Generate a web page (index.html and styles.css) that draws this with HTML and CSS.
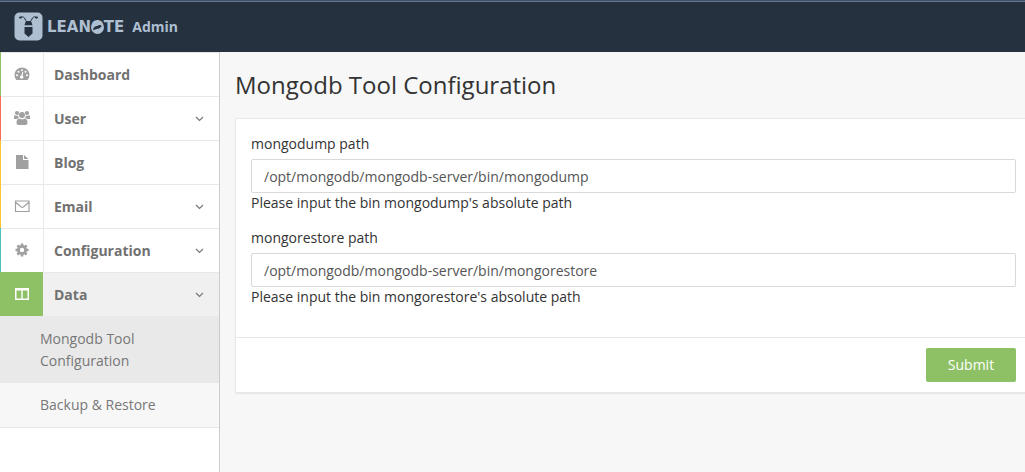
FILE: index.html
```html
<!DOCTYPE html>
<html lang="en">
<head>
<meta charset="utf-8">
<title>Leanote Admin</title>
<link rel="stylesheet" href="styles.css">
</head>
<body>
<header class="header">
  <a class="brand" href="#">
    <svg class="brand-mark" viewBox="0 0 29 29" aria-hidden="true">
      <rect x="0.500" y="0.500" width="28" height="28" rx="5" fill="#adbfd1"/>
      <path d="M6 6c1.500-1.600 3.500-1.400 4.500 0 .8 1.200 1.200 3 2.500 4M23 6c-1.500-1.600-3.500-1.400-4.500 0-.8 1.200-1.200 3-2.500 4" fill="none" stroke="#25313e" stroke-width="1"/>
      <ellipse cx="6.500" cy="5.500" rx="1.600" ry="1.100" fill="#25313e"/><ellipse cx="22.500" cy="5.500" rx="1.600" ry="1.100" fill="#25313e"/>
      <path d="M11.500 10c1-1.200 5-1.200 6 0l1 3.200h-8zM10.500 15h8v6.500l-4 3.500-4-3.500z" fill="#25313e"/>
    </svg>
    <span class="wordmark">LEAN<span class="wordmark-o">O<svg viewBox="0 0 12 12" aria-hidden="true"><circle cx="6" cy="6" r="6" fill="#adbfd1"/><path d="M2 8.500c0-3 2-4 4-4 1-1.200 3-1.200 4 .3L8.500 6C8 7.500 6 6.800 4.500 7.500z" fill="#25313e"/></svg></span>TE</span>
    <span class="brand-label">Admin</span>
  </a>
</header>
<div class="layout">
  <nav class="sidebar">
    <ul class="menu">
      <li><a class="item green" href="#"><span class="icon"><svg viewBox="0 0 16 16"><path fill-rule="evenodd" d="M2.500 14A7.500 7.500 0 1 1 13.500 14zM8 3.200a1 1 0 1 0 0 2 1 1 0 0 0 0-2zM4.500 4.700a1 1 0 1 0 0 2 1 1 0 0 0 0-2zM11.500 4.700a1 1 0 1 0 0 2 1 1 0 0 0 0-2zM3 8.200a1 1 0 1 0 0 2 1 1 0 0 0 0-2zM13 8.200a1 1 0 1 0 0 2 1 1 0 0 0 0-2zM8.300 6l-.9 3.500a1.600 1.600 0 1 0 1.200.3L9.300 6.300z"/></svg></span><span class="label">Dashboard</span></a></li>
      <li><a class="item red" href="#"><span class="icon"><svg viewBox="0 0 16 16"><circle cx="3" cy="3" r="2.100"/><circle cx="13" cy="3" r="2.100"/><circle cx="8" cy="5" r="3"/><path d="M0 9V6.500Q0 5 1 5.200q1.500 1 3 .4Q4 7 5 8 3.500 8 2.800 9zM16 9V6.500Q16 5 15 5.200q-1.500 1-3 .4Q12 7 11 8q1.500 0 2.200 1zM2.500 13q0-4.600 2.700-4.600 2.800 1.800 5.600 0 2.700 0 2.700 4.600 0 2-2 2h-7q-2 0-2-2z"/></svg></span><span class="label">User</span><svg class="chevron" viewBox="0 0 9 6"><path d="M1 1l3.500 3.500L8 1"/></svg></a></li>
      <li><a class="item yellow" href="#"><span class="icon"><svg viewBox="0 0 16 16"><path d="M2 1h7v5h5.500v9H2zM10 1l4.500 4h-4.500z"/></svg></span><span class="label">Blog</span></a></li>
      <li><a class="item yellow" href="#"><span class="icon"><svg viewBox="0 0 16 16"><path d="M1.500 3h13.500v10.500H1.500zM1.800 4.500L7.300 9q1 .7 2 0l5.400-4.500" fill="none" stroke="#a0a0a0" stroke-width="1.200"/></svg></span><span class="label">Email</span><svg class="chevron" viewBox="0 0 9 6"><path d="M1 1l3.500 3.500L8 1"/></svg></a></li>
      <li><a class="item teal" href="#"><span class="icon"><svg viewBox="0 0 16 16"><circle cx="8" cy="8" r="3.600" fill="none" stroke="#a0a0a0" stroke-width="2.800"/><path d="M8 1.500v3M8 11.500v3M1.500 8h3M11.500 8h3M3.400 3.400l2 2M10.600 10.600l2 2M3.400 12.600l2-2M10.600 5.400l2-2" stroke="#a0a0a0" stroke-width="2.600"/></svg></span><span class="label">Configuration</span><svg class="chevron" viewBox="0 0 9 6"><path d="M1 1l3.500 3.500L8 1"/></svg></a></li>
      <li>
        <a class="item active" href="#"><span class="icon"><svg viewBox="0 0 16 16"><path fill-rule="evenodd" d="M1 2h14v12H1zM2.500 4.500v8h4.800v-8zM8.700 4.500v8h4.800v-8z"/></svg></span><span class="label">Data</span><svg class="chevron" viewBox="0 0 9 6"><path d="M1 1l3.500 3.500L8 1"/></svg></a>
        <ul class="submenu">
          <li><a class="subitem current" href="#">Mongodb Tool Configuration</a></li>
          <li><a class="subitem" href="#">Backup &amp; Restore</a></li>
        </ul>
      </li>
    </ul>
  </nav>
  <main class="content">
    <h1 class="title">Mongodb Tool Configuration</h1>
    <form class="panel">
      <div class="panel-body">
        <div class="group">
          <label for="dump">mongodump path</label>
          <input id="dump" type="text" value="/opt/mongodb/mongodb-server/bin/mongodump">
          <p class="help">Please input the bin mongodump's absolute path</p>
        </div>
        <div class="group">
          <label for="restore">mongorestore path</label>
          <input id="restore" type="text" value="/opt/mongodb/mongodb-server/bin/mongorestore">
          <p class="help">Please input the bin mongorestore's absolute path</p>
        </div>
      </div>
      <footer class="panel-footer"><button class="submit" type="button">Submit</button></footer>
    </form>
  </main>
</div>
</body>
</html>
```

FILE: styles.css
```css
* { box-sizing: border-box; }
body {
  margin: 0;
  min-height: 100vh;
  display: flex;
  flex-direction: column;
  background: #f7f7f7;
  color: #333;
  font: 14px/22px "Open Sans", sans-serif;
}
ul { list-style: none; margin: 0; padding: 0; }
a { color: inherit; text-decoration: none; }
.header {
  height: 52px;
  padding-left: 14px;
  display: flex;
  align-items: center;
  background: #25313e;
  border-top: 1px solid #3f4f6b;
  box-shadow: inset 0 1px #66788d;
}
.brand { display: flex; align-items: center; color: #adbfd1; }
.brand-mark { width: 29px; height: 29px; margin-right: 4px; }
.wordmark { font: bold 15px/20px "DejaVu Sans", sans-serif; }
.wordmark-o { position: relative; }
.wordmark-o svg { position: absolute; left: 0; top: 3px; width: 13px; height: 13px; }
.brand-label { margin-left: 8px; font-weight: 700; }
.layout { flex: 1; display: flex; }
.sidebar {
  flex: 0 0 220px;
  background: #fff;
  border-right: 1px solid #ccc;
}
.item {
  display: flex;
  align-items: center;
  height: 44px;
  padding-right: 15px;
  border-top: 1px solid #e8e8e8;
  color: #717171;
  font-weight: 700;
}
.icon {
  align-self: stretch;
  width: 44px;
  margin-top: -1px;
  padding-right: 1px;
  display: flex;
  align-items: center;
  justify-content: center;
  border-right: 1px solid #e8e8e8;
  border-left: 1px solid transparent;
}
.icon svg { width: 16px; height: 16px; fill: #a0a0a0; }
.label { flex: 1; padding-left: 10px; }
.green .icon { border-left-color: #8ec165; }
.red .icon { border-left-color: #fb6b5b; }
.yellow .icon { border-left-color: #ffc333; }
.teal .icon { border-left-color: #4cc0c1; }
.active { background: #f0f0f0; }
.active .icon { background: #8ec165; border-left-color: #8ec165; border-right-color: #f0f0f0; }
.active .icon svg { fill: #fff; }
.chevron { width: 9px; height: 6px; fill: none; stroke: #777; stroke-width: 1.2; }
.submenu { background: #f7f7f7; border-bottom: 1px solid #e5e5e5; }
.subitem { display: block; padding: 11px 15px 11px 40px; color: #777; }
.current { padding: 12px 60px 11px 40px; background: #e9e9e9; }
.content { flex: 1; min-width: 0; padding-left: 15px; }
.title { margin: 19px 0 20px; font-size: 24px; line-height: 27px; font-weight: 400; }
.panel {
  background: #fff;
  border: 1px solid #e8e8e8;
  border-right: 0;
  border-radius: 2px 0 0 2px;
  box-shadow: 0 1px 1px #e4e4e4;
}
.panel-body { padding: 14px 9px 16px 15px; }
.group { margin-bottom: 14px; }
.group label { display: block; margin-bottom: 4px; }
.group input {
  display: block;
  width: 100%;
  height: 34px;
  padding: 6px 12px;
  border: 1px solid #d9d9d9;
  border-radius: 2px;
  background: #fff;
  color: #555;
  font: inherit;
}
.help { margin: 0; line-height: 20px; }
.panel-footer {
  display: flex;
  justify-content: flex-end;
  padding: 10px 9px 10px 15px;
  border-top: 1px solid #e8e8e8;
}
.submit {
  width: 90px;
  height: 34px;
  border: 0;
  border-radius: 2px;
  background: #8ec165;
  color: #fff;
  font: inherit;
}
```
